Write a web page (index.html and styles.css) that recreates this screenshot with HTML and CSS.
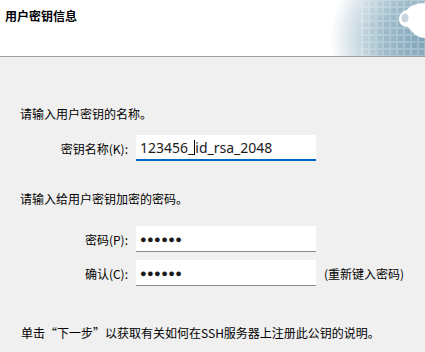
FILE: index.html
```html
<!DOCTYPE html>
<html lang="zh-CN">
<head>
    <meta charset="UTF-8">
    <title>用户密钥信息</title>
    <link rel="stylesheet" href="styles.css">
</head>
<body>
    <div class="header">
        <h1 class="title">用户密钥信息</h1>
        <svg class="banner" width="105" height="56" viewBox="0 0 105 56">
            <defs>
                <radialGradient id="fade" cx="105" cy="40" r="95" gradientUnits="userSpaceOnUse">
                    <stop offset="0" stop-color="#7ea3b8"/>
                    <stop offset="0.45" stop-color="#9fbccb"/>
                    <stop offset="0.75" stop-color="#d3e0e7"/>
                    <stop offset="1" stop-color="#ffffff"/>
                </radialGradient>
                <pattern id="grid" width="7" height="7" patternUnits="userSpaceOnUse">
                    <rect x="0.5" y="0.5" width="6" height="6" fill="none" stroke="#ffffff" stroke-opacity="0.22"/>
                </pattern>
            </defs>
            <rect width="105" height="56" fill="url(#fade)"/>
            <rect x="40" width="65" height="56" fill="url(#grid)"/>
            <!-- 오른쪽 흰 장식 -->
            <path d="M105 3 C96 3 90 6 87 10 C82 11 79 15 79 19 C79 24 83 27 88 27 C92 32 97 38 105 38 Z" fill="#ffffff"/>
            <ellipse cx="85" cy="18" rx="3.5" ry="4.5" fill="#c9d6dd"/>
        </svg>
    </div>

    <div class="content">
        <p class="hint hint-name">请输入用户密钥的名称。</p>
        <div class="form-grid grid-name">
            <label class="field-label">密钥名称(K):</label>
            <div class="field field-focus"><span>123456_</span><span class="caret"></span><span>id_rsa_2048</span></div>
        </div>

        <p class="hint hint-pass">请输入给用户密钥加密的密码。</p>
        <div class="form-grid grid-pass">
            <label class="field-label">密码(P):</label>
            <div class="field field-pass">●●●●●●</div>
            <span></span>
            <label class="field-label">确认(C):</label>
            <div class="field field-pass">●●●●●●</div>
            <span class="note">(重新键入密码)</span>
        </div>

        <p class="hint hint-footer">单击“下一步”以获取有关如何在SSH服务器上注册此公钥的说明。</p>
    </div>
</body>
</html>
```

FILE: styles.css
```css
body {
    margin: 0;
    width: 425px;
    height: 352px;
    overflow: hidden;
    background-color: #f0f0f0;
    font-family: "Noto Sans CJK SC", "Noto Sans", sans-serif;
    font-size: 12px;
    color: #000;
}

.header {
    height: 56px;
    display: flex;
    justify-content: space-between;
    align-items: flex-start;
    background-color: #ffffff;
    border-bottom: 1px solid #a0a0a0;
}

.title {
    margin: 8px 0 0 5px;
    font-size: 12px;
    font-weight: bold;
    line-height: 16px;
}

.banner {
    display: block;
}

.hint {
    margin: 0;
    padding-left: 20px;
    line-height: 16px;
}

.hint-name {
    margin-top: 49px;
}

.hint-pass {
    margin-top: 30px;
}

.hint-footer {
    margin-top: 39px;
    padding-left: 21px;
}

.form-grid {
    display: grid;
    grid-template-columns: 128px 180px auto;
    column-gap: 8px;
    row-gap: 8px;
    align-items: center;
}

.grid-name {
    margin-top: 13px;
}

.grid-pass {
    margin-top: 19px;
}

.field-label {
    text-align: right;
}

.field {
    height: 25px;
    box-sizing: border-box;
    padding: 0 4px;
    display: flex;
    align-items: center;
    background-color: #ffffff;
    border-bottom: 1px solid #8a8a8a;
    font-family: "Noto Sans", sans-serif;
    font-size: 14px;
    color: #1a1a1a;
}

.field-focus {
    height: 26px;
    border-bottom: 2px solid #0067c0;
}

.field-pass {
    height: 26px;
    font-size: 11px;
    letter-spacing: 0.4px;
}

.caret {
    display: inline-block;
    width: 1px;
    height: 15px;
    background-color: #000;
}
```
